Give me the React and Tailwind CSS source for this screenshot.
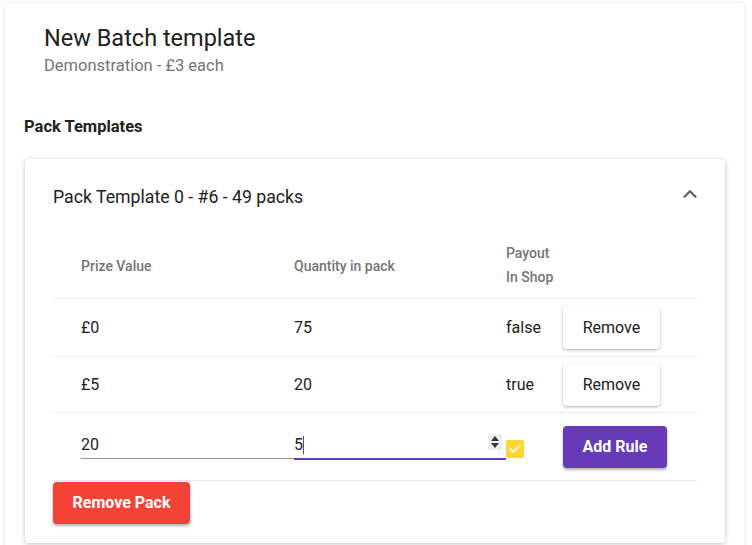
import React from 'react';
import { ChevronUp, Check } from 'lucide-react';

const rows = [
  { prize: '£0', qty: '75', payout: 'false' },
  { prize: '£5', qty: '20', payout: 'true' },
];

const grid = 'grid grid-cols-[213px_212px_57px_1fr] pl-[28px]';

const App = () => {
  return (
    <div className="bg-white pt-[3px] pl-[5px] pr-[8px] font-['Roboto',sans-serif] text-[#212121] overflow-hidden h-[545px]">
      <div className="rounded-[4px] bg-white shadow-[0_0_3px_rgba(0,0,0,0.12)] h-[600px]">
        {/* Header */}
        <div className="pl-[39px] pt-[19px]">
          <h1 className="text-[23.5px] leading-[32px] font-normal">New Batch template</h1>
          <p className="mt-[2px] text-[16.5px] leading-[20px] text-[#757575]">Demonstration - £3 each</p>
        </div>

        <h2 className="pl-[19px] mt-[41px] text-[16.5px] leading-[20px] font-bold">Pack Templates</h2>

        {/* Pack card */}
        <div className="ml-[20px] mr-[19px] mt-[22px] rounded-[4px] bg-white shadow-[0_1px_4px_rgba(0,0,0,0.25)] pb-[19px]">
          <div className="flex items-center justify-between pl-[28px] pr-[24px] h-[76px]">
            <span className="text-[17.7px]">Pack Template 0 - #6 - 49 packs</span>
            <ChevronUp className="w-[22px] h-[22px] text-[#616161] -mt-[6px]" strokeWidth={2.5} />
          </div>

          <div className="mx-[28px]">
            {/* Table header */}
            <div className={`${grid} h-[64px] items-center text-[14px] font-medium text-[#757575] border-b border-[#f0f0f0]`}>
              <span>Prize Value</span>
              <span>Quantity in pack</span>
              <span className="leading-[24px] -mt-[4px]">Payout<br />In Shop</span>
              <span />
            </div>

            {rows.map((r, i) => (
              <div
                key={i}
                className={`${grid} ${i === 0 ? 'h-[58px]' : 'h-[56px]'} items-center text-[16px] border-b border-[#ececec]`}
              >
                <span>{r.prize}</span>
                <span>{r.qty}</span>
                <span>{r.payout}</span>
                <button className="w-[97px] h-[42px] rounded-[4px] bg-white text-[16px] text-[#212121] shadow-[0_1px_3px_rgba(0,0,0,0.3)]">
                  Remove
                </button>
              </div>
            ))}

            {/* Input row */}
            <div className={`${grid} h-[68px] items-center border-b border-[#e8e8e8]`}>
              <div className="self-start mt-[19px] h-[27px] flex items-end border-b border-[#949494]">
                <span className="text-[16px] leading-[20px] pb-[3px]">20</span>
              </div>
              <div className="self-start mt-[19px] h-[28px] flex items-end border-b-2 border-[#673ab7] relative">
                <span className="text-[16px] leading-[20px] pb-[3px] flex items-center">
                  5<span className="inline-block w-[1px] h-[18px] bg-[#673ab7]" />
                </span>
                <div className="absolute right-[4px] top-[2px] w-[14px] h-[16px] bg-[#ededed] flex flex-col items-center justify-center gap-[2px]">
                  <span className="w-0 h-0 border-l-[4px] border-r-[4px] border-b-[5px] border-l-transparent border-r-transparent border-b-[#333]" />
                  <span className="w-0 h-0 border-l-[4px] border-r-[4px] border-t-[5px] border-l-transparent border-r-transparent border-t-[#333]" />
                </div>
              </div>
              <div className="mt-[4px]">
                <span className="flex items-center justify-center w-[18px] h-[18px] rounded-[2px] bg-[#fdd835]">
                  <Check className="w-[14px] h-[14px] text-white" strokeWidth={3} />
                </span>
              </div>
              <button className="w-[104px] h-[42px] rounded-[4px] bg-[#673ab7] text-white text-[16px] font-bold shadow-[0_2px_3px_rgba(0,0,0,0.3)]">
                Add Rule
              </button>
            </div>

            <button className="mt-[1px] w-[137px] h-[42px] rounded-[4px] bg-[#f44336] text-white text-[16px] font-bold shadow-[0_2px_3px_rgba(0,0,0,0.3)]">
              Remove Pack
            </button>
          </div>
        </div>
      </div>
    </div>
  );
};

export default App;
